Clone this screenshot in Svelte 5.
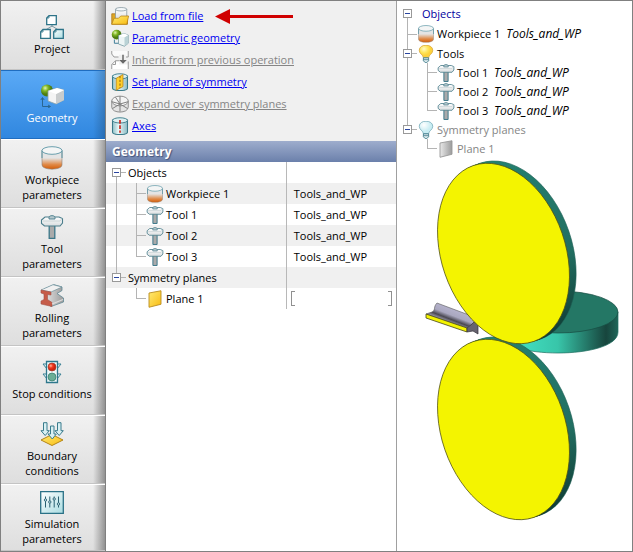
<script>
    let section = $state('Geometry');
    let open = $state({ objects: true, planes: true, viewObjects: true, viewTools: true, viewPlanes: true });

    const sections = [
        { name: 'Project', icon: 'project' },
        { name: 'Geometry', icon: 'geometry' },
        { name: 'Workpiece\nparameters', icon: 'workpiece' },
        { name: 'Tool\nparameters', icon: 'tool' },
        { name: 'Rolling\nparameters', icon: 'rail' },
        { name: 'Stop conditions', icon: 'light' },
        { name: 'Boundary\nconditions', icon: 'boundary' },
        { name: 'Simulation\nparameters', icon: 'sliders' }
    ];

    const actions = [
        { name: 'Load from file', icon: 'folder', marked: true },
        { name: 'Parametric geometry', icon: 'geometrySmall' },
        { name: 'Inherit from previous operation', icon: 'inherit', disabled: true },
        { name: 'Set plane of symmetry', icon: 'symmetry' },
        { name: 'Expand over symmetry planes', icon: 'expand', disabled: true },
        { name: 'Axes', icon: 'axes' }
    ];

    const objects = [
        { name: 'Workpiece 1', icon: 'workpiece', source: 'Tools_and_WP' },
        { name: 'Tool 1', icon: 'tool', source: 'Tools_and_WP' },
        { name: 'Tool 2', icon: 'tool', source: 'Tools_and_WP' },
        { name: 'Tool 3', icon: 'tool', source: 'Tools_and_WP' }
    ];
    const tools = objects.slice(1);

    // steps between the front and the back face of a roll
    const depth = [7, 6, 5, 4, 3, 2, 1];
</script>

{#snippet icon(name, size)}
    <svg class="icon" width={size} height={size} viewBox="0 0 24 24" aria-hidden="true">
        {#if name === 'project'}
            <path d="M12 9v3M5.500 15l6.500-4 6.500 4" fill="none" stroke="#7d9aa5" />
            <path d="M9 .7h7.300v9H6.700V3z" fill="#fff" stroke="#2d7388" stroke-width="1.300" />
            <path d="M3 14.500h7.300v8.800H.7v-6.500z" fill="#fff" stroke="#2d7388" stroke-width="1.300" />
            <path d="M16 14.500h7.300v8.800h-9.600v-6.500z" fill="url(#ice)" stroke="#2d7388" stroke-width="1.300" />
            <path d="M9 1v2H7M3 15v2H1M16 15v2h-2" fill="none" stroke="#2d7388" stroke-width=".8" />
        {:else if name === 'geometry'}
            <circle cx="7" cy="6.500" r="6" fill="url(#ball)" />
            <path d="M2.500 14v8.500H10M.8 16l1.700-2.500L4.200 16M8 21l2.500 1.500L8 24" fill="none" stroke="#2a6690" />
            <path d="M8 7l9-3 7 2v10l-8 4-8-3z" fill="#f4f4f4" stroke="#8ba3aa" stroke-width=".8" />
            <path d="M16 10l8-4v10l-8 4z" fill="#c9cccd" />
            <path d="M8 7l9-3 7 2-8 4z" fill="#fff" />
        {:else if name === 'geometrySmall'}
            <circle cx="7.500" cy="7.500" r="6.500" fill="url(#ball)" />
            <path d="M4.500 14v5h6" fill="none" stroke="#3c7b96" stroke-width="1.300" />
            <path d="M10 9l7-3 6 2v11l-5 4-8-3z" fill="#edf5f5" stroke="#6d949d" />
            <path d="M18 11l5-3v11l-5 4z" fill="#bad2d5" />
            <path d="M10 9l7-3 6 2-5 3z" fill="#fff" />
        {:else if name === 'workpiece'}
            <path d="M2 4.500v14.500c0 5.500 20 5.500 20 0V4.500z" fill="url(#hot)" stroke="#8a8178" stroke-width=".6" />
            <path d="M2 12V4.500M22 12V4.500" stroke="#5b96a6" />
            <ellipse cx="12" cy="4.500" rx="10" ry="3.800" fill="#f4f5f5" stroke="#5b96a6" stroke-width=".9" />
        {:else if name === 'tool'}
            <path d="M9.200 9h5.600v14.300H9.200z" fill="#aaa" stroke="#3b7789" stroke-width="1.300" />
            <path d="M1.500 5L5 2h14l3.500 1.500V8L20 11H4.500l-3-2.500z" fill="url(#pale)" stroke="#4b7e8c" stroke-width="1.100" />
            <path d="M3 6h17l2-2.500" fill="none" stroke="#c3ced1" stroke-width=".8" />
            <path d="M9 2.500c0-2.500 6-2.500 6 0v1.500H9z" fill="#b5c8cd" stroke="#4b7e8c" stroke-width=".9" />
        {:else if name === 'rail'}
            <path d="M4 5l10-4.300L22 3v3.500l-5 3 6.500 4.500v4L11 22.500 5 18z" fill="url(#steel)" stroke="#608894" stroke-width=".8" />
            <path d="M1 6L13 .7 22 3l-11 5z" fill="#f1f1f1" stroke="#608894" stroke-width=".6" />
            <path d="M1 6l10 2v3l-3.500-.5v5l4.500 3v4L1 20v-3l3-1.500V10L1 9z" fill="#c65c49" stroke="#a35348" stroke-width=".6" />
            <path d="M12 20l11-4.500" stroke="#ddd" stroke-width="1.300" />
        {:else if name === 'light'}
            <path d="M3 4h4v5zM21 4h-4v5zM3 14h4v5zM21 14h-4v5z" fill="#eef8f9" stroke="#3b8195" />
            <path d="M6.500 1.500h11v21h-11z" fill="#edf7f8" stroke="#2e778c" stroke-width="1.300" />
            <circle cx="12" cy="7" r="4" fill="url(#red)" stroke="#9e3b2d" stroke-width=".7" />
            <circle cx="12" cy="17" r="4" fill="#6aae96" stroke="#347a6a" stroke-width=".7" />
        {:else if name === 'boundary'}
            <path d="M1 18l11-5.500L23 18l-11 5.500z" fill="url(#gold)" stroke="#b38417" />
            <path d="M3.500.7H7v8h2.300L5.200 13.500 1 8.700h2.500zM17.500.7H21v8h2.300l-4.100 4.800L15 8.700h2.500zM10.500 4H14v8h2.300l-4 5L8 12h2.500z" fill="#d9f0f3" stroke="#397b8c" />
        {:else if name === 'sliders'}
            <path d="M.7 1.700h22.600v21.600H.7z" fill="url(#ice)" stroke="#2a7186" stroke-width="1.300" />
            <path d="M5.500 6.500v11M9.800 6.500v11M14.200 6.500v11M18.500 6.500v11" stroke="#285f70" />
            <g fill="#d4eff2" stroke="#285f70" stroke-width=".9">
                <circle cx="5.500" cy="10" r="1.200" /><circle cx="9.800" cy="12" r="1.200" />
                <circle cx="14.200" cy="9" r="1.200" /><circle cx="18.500" cy="14" r="1.200" />
            </g>
        {:else if name === 'folder'}
            <path d="M1 9h7l1 3h13v11H1z" fill="#dda626" stroke="#a97715" />
            <path d="M6 3v14h15V3z" fill="url(#pale)" stroke="#83969f" />
            <ellipse cx="13.500" cy="3" rx="7.500" ry="2.300" fill="#f4f8fa" stroke="#83969f" />
            <path d="M1 23l3-8h6l3-3h10.500L21 23z" fill="url(#gold)" stroke="#b78118" />
        {:else if name === 'inherit'}
            <path d="M1 0v4l4 4h5l1-3h8l1 3h3V0z" fill="#fafafa" />
            <path d="M1 18l5-5h5v5h12v6H1z" fill="#fff" />
            <path d="M1 0v4l3 4h6M23 0v8h-3M1 24v-6l5-5h5M23 14v10M6 13v5H2" fill="none" stroke="#999" stroke-width="1.300" />
            <path d="M15 5v7h-4l5 5 5-5h-4V5z" fill="#686868" />
        {:else if name === 'symmetry' || name === 'axes'}
            <path d="M2 4v16c0 4.500 20 4.500 20 0V4z" fill="url(#glass)" stroke="#387989" stroke-width="1.400" />
            <ellipse cx="12" cy="4.500" rx="10" ry="3.500" fill="#dceff1" stroke="#387989" stroke-width="1.200" />
            {#if name === 'symmetry'}
                <path d="M7 7l9-5v16l-9 5z" fill="#ffcf2c" stroke="#b88218" />
                <path d="M12 4v16" stroke="#966711" stroke-width="1.400" stroke-dasharray="3 2" />
            {:else}
                <path d="M12 4v17" stroke="#cc281f" stroke-width="2.200" stroke-dasharray="5 2" />
            {/if}
        {:else if name === 'expand'}
            <path d="M1 8v8c0 9 22 9 22 0V8z" fill="#e4e4e4" stroke="#8c8c8c" stroke-width="1.300" />
            <ellipse cx="12" cy="8" rx="11" ry="6.500" fill="#f4f4f4" stroke="#8c8c8c" stroke-width="1.300" />
            <path d="M12 1.500V22M1.500 9L12 12l10.500-3M2 18l10-6 10 6M6 3l6 9" fill="none" stroke="#7c7c7c" stroke-width="1.300" />
        {:else if name === 'plane' || name === 'planeOff'}
            <path d="M4 4l16-3v18L4 23z" fill={name === 'plane' ? 'url(#gold)' : 'url(#steel)'} stroke={name === 'plane' ? '#ba8c20' : '#999'} stroke-width="1.200" />
        {:else if name === 'bulb' || name === 'bulbOff'}
            <path d="M8.500 17c0-4-5.500-5-5.500-10 0-9 18-9 18 0 0 5-5.500 6-5.500 10z" fill={name === 'bulb' ? 'url(#lamp)' : 'url(#cold)'} stroke={name === 'bulb' ? '#d9a83a' : '#78aebb'} stroke-width="1.100" />
            <path d="M8.500 17h7v4L13 23.500h-2L8.500 21z" fill="#d6e6e9" stroke="#3f7b8a" stroke-width="1.200" />
            <path d="M9 19.500h6" stroke="#3f7b8a" />
        {/if}
    </svg>
{/snippet}

{#snippet toggle(key, label)}
    <span class="gutter head">
        <button class="toggle" aria-label="Toggle {label}" aria-expanded={open[key]} onclick={() => (open[key] = !open[key])}>
            <svg width="9" height="9" viewBox="0 0 9 9" aria-hidden="true">
                <path d="M2 4.500h5" stroke="#2945a0" />
                {#if !open[key]}<path d="M4.500 2v5" stroke="#2945a0" />{/if}
            </svg>
        </button>
    </span>
{/snippet}

{#snippet roll(y)}
    <g transform="translate(106.500 {y}) rotate(-19)">
        {#each depth as step}
            <ellipse cx={step} cy="0" rx="62" ry="93" fill="url(#rim)" stroke={step === 7 ? '#1d5f54' : 'none'} stroke-width=".6" />
        {/each}
        <ellipse rx="62" ry="93" fill="#f4f400" stroke="#4c4c12" stroke-width=".7" />
    </g>
{/snippet}

<main class="window">
    <nav class="sections" aria-label="Sections">
        {#each sections as item}
            <button class="section" class:active={section === item.name} onclick={() => (section = item.name)}>
                {@render icon(item.icon, 24)}
                <span>{item.name}</span>
            </button>
        {/each}
    </nav>

    <section class="editor">
        <ul class="actions">
            {#each actions as action}
                <li>
                    {@render icon(action.icon, 18)}
                    <a href="#top" class:disabled={action.disabled} aria-disabled={action.disabled}>{action.name}</a>
                    {#if action.marked}
                        <svg class="pointer" width="79" height="15" viewBox="0 0 79 15" aria-hidden="true">
                            <path d="M0 7.500L15 0v6h63v3H15v6z" fill="#d00000" />
                        </svg>
                    {/if}
                </li>
            {/each}
        </ul>

        <h2>Geometry</h2>

        <table>
            <tbody>
                <tr>
                    <th scope="row"><div class="node">{@render toggle('objects', 'objects')}<span class="label">Objects</span></div></th>
                    <td></td>
                </tr>
                {#if open.objects}
                    {#each objects as object, i}
                        <tr>
                            <th scope="row">
                                <div class="node">
                                    <span class="gutter pass"></span>
                                    <span class="gutter" class:tee={i < objects.length - 1} class:elbow={i === objects.length - 1}></span>
                                    {@render icon(object.icon, 18)}
                                    <span class="label">{object.name}</span>
                                </div>
                            </th>
                            <td>{object.source}</td>
                        </tr>
                    {/each}
                {/if}
                <tr>
                    <th scope="row"><div class="node last">{@render toggle('planes', 'planes')}<span class="label">Symmetry planes</span></div></th>
                    <td></td>
                </tr>
                {#if open.planes}
                    <tr>
                        <th scope="row">
                            <div class="node">
                                <span class="gutter"></span>
                                <span class="gutter elbow"></span>
                                {@render icon('plane', 18)}
                                <span class="label">Plane 1</span>
                            </div>
                        </th>
                        <td class="range"><div class="brackets"><span class="left"></span><span class="right"></span></div></td>
                    </tr>
                {/if}
            </tbody>
        </table>
    </section>

    <section class="view">
        <div class="tree">
            <div class="node root">{@render toggle('viewObjects', 'view objects')}<span class="title">Objects</span></div>
            {#if open.viewObjects}
                <div class="node">
                    <span class="gutter tee"></span>
                    {@render icon('workpiece', 18)}
                    <span class="label">Workpiece 1 <i>Tools_and_WP</i></span>
                </div>
                <div class="node middle">{@render toggle('viewTools', 'view tools')}{@render icon('bulb', 18)}<span class="label">Tools</span></div>
                {#if open.viewTools}
                    {#each tools as tool, i}
                        <div class="node">
                            <span class="gutter pass"></span>
                            <span class="gutter" class:tee={i < tools.length - 1} class:elbow={i === tools.length - 1}></span>
                            {@render icon(tool.icon, 18)}
                            <span class="label">{tool.name} <i>{tool.source}</i></span>
                        </div>
                    {/each}
                {/if}
                <div class="node last off">{@render toggle('viewPlanes', 'view planes')}{@render icon('bulbOff', 18)}<span class="label">Symmetry planes</span></div>
                {#if open.viewPlanes}
                    <div class="node off">
                        <span class="gutter"></span>
                        <span class="gutter elbow"></span>
                        {@render icon('planeOff', 18)}
                        <span class="label">Plane 1</span>
                    </div>
                {/if}
            {/if}
        </div>

        <svg class="scene" viewBox="0 0 235 380" role="img" aria-label="Rolls and workpiece">
            <defs>
                <linearGradient id="ice" x2="1" y2="1"><stop stop-color="#fff" /><stop offset="1" stop-color="#a9dce1" /></linearGradient>
                <linearGradient id="glass"><stop stop-color="#91bfc7" /><stop offset=".4" stop-color="#e7f7f8" /><stop offset="1" stop-color="#8ebbc3" /></linearGradient>
                <linearGradient id="steel"><stop stop-color="#e9e9e9" /><stop offset="1" stop-color="#9b9b9b" /></linearGradient>
                <linearGradient id="pale" x2="0" y2="1"><stop stop-color="#fff" /><stop offset="1" stop-color="#d9dddf" /></linearGradient>
                <linearGradient id="hot" x2="0" y2="1"><stop offset=".4" stop-color="#e4e4e4" /><stop offset=".75" stop-color="#e08a48" /><stop offset="1" stop-color="#d45c08" /></linearGradient>
                <linearGradient id="gold" x2="1" y2="1"><stop stop-color="#ffeb75" /><stop offset="1" stop-color="#f8bb10" /></linearGradient>
                <radialGradient id="ball" cx=".35" cy=".3"><stop stop-color="#e2f5b0" /><stop offset=".5" stop-color="#7fb524" /><stop offset="1" stop-color="#4c7c12" /></radialGradient>
                <radialGradient id="red" cx=".35" cy=".35"><stop stop-color="#ffb8a0" /><stop offset=".5" stop-color="#f43b20" /><stop offset="1" stop-color="#cd2410" /></radialGradient>
                <radialGradient id="lamp" cx=".35" cy=".3"><stop stop-color="#fffac8" /><stop offset=".6" stop-color="#ffe65c" /><stop offset="1" stop-color="#fdd23c" /></radialGradient>
                <radialGradient id="cold" cx=".35" cy=".3"><stop stop-color="#fff" /><stop offset="1" stop-color="#c9edf3" /></radialGradient>
                <linearGradient id="rim" x2="0" y2="1"><stop stop-color="#24806f" /><stop offset=".6" stop-color="#226f62" /><stop offset="1" stop-color="#103d35" /></linearGradient>
                <linearGradient id="side"><stop offset=".25" stop-color="#3fd9bb" /><stop offset=".5" stop-color="#38c5a9" /><stop offset=".9" stop-color="#17453d" /><stop offset="1" stop-color="#1f6558" /></linearGradient>
                <linearGradient id="bar" gradientUnits="userSpaceOnUse" x1="58" y1="150" x2="53" y2="163"><stop stop-color="#b6b3cd" /><stop offset=".5" stop-color="#a9a7bf" /><stop offset=".8" stop-color="#4a4852" /><stop offset="1" stop-color="#8f8d9d" /></linearGradient>
            </defs>
            <path d="M101 153v20c0 28 120 28 120 0v-20z" fill="url(#side)" stroke="#206f61" stroke-width=".7" />
            <ellipse cx="161" cy="153" rx="60" ry="21" fill="#247765" stroke="#174c42" stroke-width=".7" />
            <path d="M40 144l32 12 7 7-5 3-4 3-41-14 6-2c4-2 1-5 5-9z" fill="url(#bar)" stroke="#555" stroke-width=".6" />
            <path d="M29 155l41 14v4l-41-14z" fill="#f4f400" stroke="#46451b" stroke-width=".8" />
            <path d="M70 169l4-3 3-3 2 1 2-1v12l-5-3-6 1z" fill="#66636f" stroke="#34323a" stroke-width=".7" />
            {@render roll(270.5)}
            {@render roll(94.5)}
        </svg>
    </section>
</main>

<style>
    :global(body) {
        margin: 0;
    }

    .window {
        box-sizing: border-box;
        min-height: 100vh;
        display: grid;
        grid-template-columns: 105px minmax(0, 291fr) minmax(0, 235fr);
        border: 1px solid #808080;
        background: #fff;
        color: #000;
        font: 11px/16px "Open Sans", "Noto Sans", sans-serif;
    }

    button {
        font: inherit;
        color: inherit;
    }

    .icon {
        display: block;
        flex: none;
    }

    .sections {
        display: grid;
        grid-template-rows: repeat(7, 69px) minmax(65px, 1fr);
        border-right: 1px solid #808080;
    }

    .section {
        display: flex;
        flex-direction: column;
        align-items: center;
        justify-content: center;
        gap: 2px;
        padding: 0 10px 0 8px;
        border: 0;
        border-top: 1px solid #fff;
        border-bottom: 1px solid #c4c4c4;
        background:
            linear-gradient(to right, transparent calc(100% - 12px), rgba(0, 0, 0, 0.35)),
            linear-gradient(#f1f1f1, #dedede);
        line-height: 15px;
        white-space: pre-line;
        cursor: pointer;
    }

    .section.active {
        border-color: #1f6dc0;
        background:
            linear-gradient(to right, transparent calc(100% - 12px), rgba(0, 0, 0, 0.2)),
            linear-gradient(#5aa9f6, #3087df);
        color: #fff;
    }

    .section:first-child {
        border-top: 0;
    }

    .editor {
        border-right: 1px solid #a0a0a0;
    }

    .actions {
        margin: 0;
        padding: 4px 5px;
        list-style: none;
        background: #f0f0f0;
    }

    .actions li {
        display: flex;
        align-items: center;
        gap: 3px;
        height: 22px;
        white-space: nowrap;
    }

    .actions a {
        color: #0000f0;
    }

    .actions a.disabled {
        color: #858585;
    }

    .pointer {
        margin-left: 9px;
    }

    h2 {
        margin: 0;
        padding: 0 6px;
        background: linear-gradient(#9eadcd, #6b80ab);
        color: #fff;
        font-size: 12px;
        line-height: 21px;
        text-shadow: 1px 1px 1px #44557d;
    }

    table {
        width: 100%;
        border-collapse: collapse;
        table-layout: fixed;
    }

    tr:nth-child(even) {
        background: #f0f0f0;
    }

    th,
    td {
        height: 21px;
        padding: 0;
        font-weight: normal;
        text-align: left;
    }

    th {
        width: 62%;
    }

    td {
        padding-left: 7px;
        border-left: 1px solid #b8b8b8;
    }

    .range {
        padding: 0 4px;
    }

    .brackets {
        display: flex;
        justify-content: space-between;
    }

    .brackets span {
        width: 3px;
        height: 13px;
        border: 1px solid #909090;
    }

    .brackets .left {
        border-right: 0;
    }

    .brackets .right {
        border-left: 0;
    }

    .node {
        display: flex;
        align-items: center;
        height: 21px;
        white-space: nowrap;
    }

    .gutter {
        --line: linear-gradient(#b4b4b4, #b4b4b4) no-repeat;
        flex: none;
        align-self: stretch;
        width: 20px;
    }

    .gutter.pass {
        background: var(--line) 10px 0 / 1px 100%;
    }

    .gutter.tee {
        background: var(--line) 10px 0 / 1px 100%, var(--line) 10px 50% / 10px 1px;
    }

    .gutter.elbow {
        background: var(--line) 10px 0 / 1px 50%, var(--line) 10px 50% / 10px 1px;
    }

    .gutter.head {
        display: flex;
        align-items: center;
        background: var(--line) 10px 100% / 1px 50%, var(--line) 10px 50% / 10px 1px;
    }

    .middle .gutter.head {
        background: var(--line) 10px 0 / 1px 100%, var(--line) 10px 50% / 10px 1px;
    }

    .last .gutter.head {
        background: var(--line) 10px 0 / 1px 50%, var(--line) 10px 50% / 10px 1px;
    }

    .toggle {
        display: block;
        box-sizing: border-box;
        width: 9px;
        height: 9px;
        margin-left: 6px;
        padding: 0;
        border: 0;
        outline: 1px solid #999;
        outline-offset: -1px;
        background: #fff;
        cursor: pointer;
    }

    .toggle svg {
        display: block;
    }

    .label {
        padding-left: 2px;
    }

    .label i {
        margin-left: 3px;
        font-size: 12px;
    }

    .title {
        padding-left: 5px;
        color: #0000a0;
    }

    .view {
        min-width: 0;
    }

    .tree {
        padding: 2px 0 1px;
    }

    .tree .node {
        height: 19px;
    }

    .tree .root {
        height: 21px;
    }

    .tree .root + .node {
        height: 20px;
    }

    .root .gutter.head {
        background: var(--line) 10px 100% / 1px 50%;
    }

    .off {
        color: #858585;
    }

    .scene {
        display: block;
        width: 100%;
    }
</style>
